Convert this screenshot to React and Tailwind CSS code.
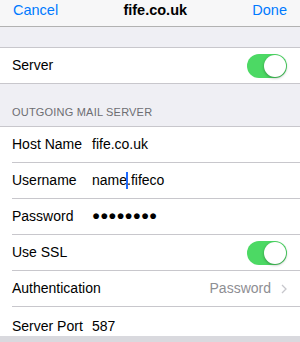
import React from 'react';

const font = { fontFamily: '"Liberation Sans", Arial, sans-serif' };

function Toggle() {
  return (
    <div className="relative w-[40px] h-[24px] rounded-full bg-[#4cd964]">
      <div className="absolute right-[1px] top-[1px] w-[22px] h-[22px] rounded-full bg-white shadow-[0_1px_3px_rgba(0,0,0,0.35)]" />
    </div>
  );
}

function Row({ label, children, last }) {
  return (
    <div className="pl-[12px]">
      <div
        className={`flex pr-[13px] ${
          last ? 'h-[29px] items-start pt-[9px]' : 'h-[36px] items-center border-b border-[#c8c7cc]'
        }`}
      >
        <span className="w-[80px] shrink-0 text-[14px] text-black">{label}</span>
        <div className="flex-1 flex items-center">{children}</div>
      </div>
    </div>
  );
}

export default function App() {
  return (
    <div className="w-[300px] h-[342px] bg-[#efeff4] overflow-hidden" style={font}>
      {/* nav bar */}
      <div className="h-[27px] bg-[#f7f7f8] border-b border-[#b2b2b2] flex items-start justify-between px-[13px]">
        <span className="text-[14.5px] text-[#007aff]">Cancel</span>
        <span className="text-[14.5px] font-bold text-black">fife.co.uk</span>
        <span className="text-[14.5px] text-[#007aff] font-medium">Done</span>
      </div>

      <div className="h-[20px]" />
      <div className="bg-white border-y border-[#c8c7cc] h-[37px] flex items-center justify-between pl-[12px] pr-[13px]">
        <span className="text-[14px]">Server</span>
        <Toggle />
      </div>

      <div className="h-[42px] flex items-end pl-[12px] pb-[6px]">
        <span className="text-[11px] text-[#6d6d72] tracking-[0.2px]">OUTGOING MAIL SERVER</span>
      </div>

      <div className="bg-white border-t border-[#c8c7cc]">
        <Row label="Host Name">
          <span className="text-[14px]">fife.co.uk</span>
        </Row>
        <Row label="Username">
          <span className="text-[14px]">name</span>
          <span className="w-[2px] h-[17px] bg-[#1f6bff] -mx-[1px]" />
          <span className="text-[14px]">.fifeco</span>
        </Row>
        <Row label="Password">
          <span className="text-[13.5px]">●●●●●●●●</span>
        </Row>
        <Row label="Use SSL">
          <div className="flex-1 flex justify-end">
            <Toggle />
          </div>
        </Row>
        <Row label="Authentication">
          <div className="flex-1 flex justify-end items-center gap-[10px]">
            <span className="text-[14px] text-[#8e8e93]">Password</span>
            <svg width="6" height="10" viewBox="0 0 6 10" fill="none">
              <path d="M1 1l4 4-4 4" stroke="#c7c7cc" strokeWidth="1.3" />
            </svg>
          </div>
        </Row>
        <Row label="Server Port" last>
          <span className="text-[14px]">587</span>
        </Row>
      </div>
      <div className="h-[6px] bg-[#d9d9de]" />
    </div>
  );
}
